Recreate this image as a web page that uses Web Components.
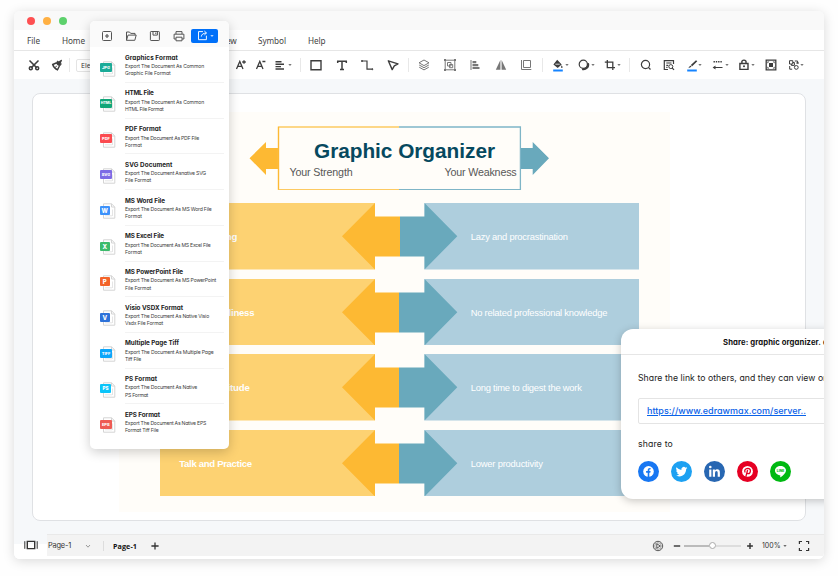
<!DOCTYPE html>
<html lang="en">
<head>
<meta charset="utf-8">
<title>Graphic Organizer</title>
<style>
    html, body { margin: 0; width: 838px; height: 576px; overflow: hidden; background: #fefefe; }
    body { font-family: Inter, "Liberation Sans", sans-serif; color: #333; }
</style>
</head>
<body>
<editor-window></editor-window>

<script>
// 14x14 glyphs, drawn with currentColor
const ICONES = {
    cut: '<g stroke-width="1.5"><path d="M2.5 2.5 9.6 9.6M11.5 2.5 4.4 9.6"/><circle cx="3.8" cy="10.3" r="1.5"/><circle cx="10.2" cy="10.3" r="1.5"/></g>',
    brush: '<path fill="currentColor" d="M11.6 2.2 8.7 3.8 7.6 3 6.2 5.4 9.7 8 11.3 5.8 10.4 5Z"/><path stroke-width="1.4" d="M6.2 5 2.7 6.5C3.2 8.5 5 10.6 7.5 11.8L9.4 8"/><path d="M5.1 9.7 6.8 7.7"/>',
    aplus: '<path stroke-width="1.3" d="M2.5 11 5.8 3.4 9 11M3.8 8.4H7.8M8.2 4H11.8M10 2.2V5.8"/>',
    aminus: '<path stroke-width="1.3" d="M2.5 11 5.8 3.4 9 11M3.8 8.4H7.8M8.4 3.5H11.4"/>',
    para: '<path stroke-width="1.4" d="M2.5 3.8H8.5M2.5 6.2H11M2.5 8.6H8M2.5 11H11"/>',
    rect: '<path stroke-width="1.4" d="M2 2.8H12V11.8H2Z"/>',
    text: '<path stroke-width="1.5" d="M2.7 5V3.2H11.3V5M7 3.2V11.5M5 11.5H9"/>',
    link: '<path stroke-width="1.2" d="M2.2 3H7V11.2H11.5"/><circle fill="currentColor" cx="2" cy="3" r=".6"/><circle fill="currentColor" cx="12.2" cy="11.2" r=".6"/>',
    arrow: '<path stroke-width="1.4" stroke-linejoin="round" d="M2.3 2.8 12 5.8 8.3 7.8 6.2 11.6Z"/>',
    layers: '<path d="M7 2 12 4.8 7 7.6 2 4.8ZM2.2 7 7 9.7 11.8 7M2.2 9.2 7 11.9 11.8 9.2"/>',
    group: '<path d="M2.2 2.2H11.8V11.8H2.2Z"/><path d="M4.5 4.5H8V8H4.5ZM6.5 6.5H9.7V9.7H6.5Z"/><path fill="currentColor" stroke="none" d="M1 1h2v2H1zM11 1h2v2h-2zM1 11h2v2H1zM11 11h2v2h-2z"/>',
    left: '<path d="M3 2V12"/><path fill="currentColor" stroke="none" d="M4.5 3H8.3V5.3H4.5ZM4.5 6H10.3V8.2H4.5ZM4.5 9H11.5V11H4.5Z"/>',
    flip: '<path fill="currentColor" stroke="none" d="M6.4 2V11.7H1.8ZM7.6 2V11.7H12.2Z"/>',
    size: '<path d="M4.5 2.5H11.5V9.5H4.5Z"/><path d="M2.5 2V11.5H12.3"/>',
    bucket: '<path fill="currentColor" stroke="none" d="M6.2 1.7 10.7 6.4 6.7 10 2.4 6.5ZM10.7 7.3c1 1.4 1.3 2.7.2 2.7s-1-1.3-.2-2.7Z"/><path stroke="#fff" stroke-width=".8" d="M4.4 6.2H8.7"/><path stroke="#1684ff" stroke-width="2" d="M2.2 12.4H11.8"/>',
    shadow: '<circle cx="6.3" cy="6.2" r="4.1" stroke-width="1.2"/><path stroke-width="2" d="M11 5.2A4.7 4.7 0 0 1 5.2 11.1"/>',
    crop: '<path stroke-width="1.3" d="M4.3 2V9.7H12M1.8 4.2H9.8V12"/>',
    search: '<circle cx="6.5" cy="6.5" r="4.1" stroke-width="1.2"/><path stroke-width="1.3" d="M9.4 9.4 11.5 11.5"/>',
    find: '<path stroke-width="1.2" d="M6 11.5H2.3V2.7H11.5V6M4.3 5H9.5M4.3 7.3H6.2M4.3 9.3H5.5"/><circle cx="8.8" cy="8.6" r="2"/><path stroke-width="1.2" d="M10.2 10 12 11.8"/>',
    pen: '<path fill="currentColor" stroke="none" d="M11 2.2 12.3 3.3 7.2 8.3 5.8 7.1ZM5.2 7.6 6.6 8.8 3.2 10.2Z"/><path stroke="#1684ff" stroke-width="2" d="M2.2 12.4H11.8"/>',
    lines: '<path stroke-width="1.5" stroke-dasharray="1.4 .9" d="M2.5 3.7H11.5"/><path stroke-width="1.2" d="M3 9.5H11.5"/><path fill="currentColor" stroke="none" d="M1.6 9.5 4.5 7.6V11.4Z"/>',
    lock: '<path stroke-width="1.4" d="M2.9 5.5H11V11.4H2.9ZM4.9 5.5V3.2Q7 1 9 3.2V5.5"/><circle fill="currentColor" stroke="none" cx="7" cy="8.3" r="1"/>',
    frame: '<path stroke-width="1.3" d="M2.2 2.2H11.8V11.8H2.2Z"/><path fill="currentColor" stroke="none" d="M5 5h4v4H5zM3.4 3.4h2L3.4 5.4zM10.6 3.4v2L8.6 3.4zM3.4 10.6v-2l2 2zM10.6 10.6h-2l2-2z"/>',
    swap: '<path d="M2.5 2.7H5.8V6H2.5ZM2.7 8V11.2H5.2M7.8 3H10.6V5.6M9.2 5H12"/><circle cx="9.3" cy="9.4" r="1.9"/><path d="M5.8 4.5H7.4V7.4H4.4V6"/>',
    caret: '<path fill="currentColor" stroke="none" opacity=".7" d="M5.3 5.9H8.7L7 8.1Z"/>',
    add: '<rect x="2.5" y="2.5" width="9" height="9" rx="1"/><path stroke-width="1.2" d="M7 5V9M5 7H9"/>',
    folder: '<path stroke-linejoin="round" d="M2.5 11.3V3H5.5L6.7 4.4H11V6M2.5 11.3 4 6.1H12.2L10.8 11.3Z"/>',
    save: '<rect x="2.4" y="2.5" width="9" height="9" rx=".7"/><path d="M5 2.6V6.1H9.4V2.6M7.8 3.5V5"/>',
    print: '<path d="M4 5V2.6H10V5M3.9 10H2.1V5.2H11.9V10H10M4 8.2H10V11.8H4Z"/>',
    export: '<path d="M7.5 2.8H2.7V11.5H11.2V7.2M5.7 8.2C6 5.7 7.6 4.6 11.2 4.3M9 2.2 11.3 4.3 9 6.4"/>',
    pages: '<path stroke-width="1.4" d="M3.3 3.4H10.7V10.6H3.3Z"/><path stroke-width="1" d="M.8 3.2V10.8M13.2 3.2V10.8"/>',
    chevron: '<path d="M5 6 7 8.2 9 6"/>',
    plus: '<path stroke-width="1.3" d="M3.4 7H10.6M7 3.4V10.6"/>',
    plusb: '<path stroke-width="1.4" d="M4.1 7H9.9M7 4.1V9.9"/>',
    minus: '<path stroke-width="1.4" d="M3.8 7H10.2"/>',
    play: '<circle cx="7" cy="7" r="4.7" stroke-width=".8"/><path stroke-width=".8" d="M5.8 4.8 9.4 7 5.8 9.2Z"/><circle cx="7" cy="7" r="3.3" stroke-width=".4"/>',
    full: '<path stroke-width="1.2" d="M2.4 5V2.5H5M9 2.5H11.6V5M11.6 9V11.5H9M5 11.5H2.4V9"/>'
};

class UiIcon extends HTMLElement {
    connectedCallback() {
        this.attachShadow({ mode: 'open' }).innerHTML = `
            <style>
                :host { display: block; flex: none; width: 14px; height: 14px; }
                svg { display: block; width: 100%; height: 100%; }
            </style>
            <svg viewBox="0 0 14 14" fill="none" stroke="currentColor">${ICONES[this.getAttribute('name')]}</svg>`;
    }
}
customElements.define('ui-icon', UiIcon);

// One line of text, tracked out or in to fill the width it is given
class FitText extends HTMLElement {
    connectedCallback() {
        this.attachShadow({ mode: 'open' }).innerHTML = `
            <style>
                :host { display: block; white-space: nowrap; flex: none; }
                span { display: inline-block; text-decoration: var(--line, none); }
            </style>
            <span><slot></slot></span>`;
        const w = parseFloat(this.getAttribute('w'));
        const span = this.shadowRoot.querySelector('span');
        const natural = span.getBoundingClientRect().width;
        this.style.width = w + 'px';
        span.style.letterSpacing = (w - natural) / this.textContent.length + 'px';
    }
}
customElements.define('fit-text', FitText);

// Row of icons placed by their centres; "|" is a divider
class ToolStrip extends HTMLElement {
    connectedCallback() {
        let end = parseFloat(this.getAttribute('start') || 0);
        let html = '';
        this.getAttribute('items').trim().split(/\s+/).forEach(item => {
            const [name, center, color] = item.split(':');
            const half = name == '|' ? 0.5 : 7;
            const gap = center - half - end;
            end = +center + half;
            html += name == '|'
                ? `<i style="margin-left:${gap}px"></i>`
                : `<ui-icon name="${name}" style="margin-left:${gap}px;${color ? 'color:' + color : ''}"></ui-icon>`;
        });
        this.attachShadow({ mode: 'open' }).innerHTML = `
            <style>
                :host { display: flex; align-items: center; color: #3d3d3d; }
                i { width: 1px; height: 14px; background: #e8e8e8; flex: none; }
            </style>${html}`;
    }
}
customElements.define('tool-strip', ToolStrip);

class FormatItem extends HTMLElement {
    connectedCallback() {
        const at = n => this.getAttribute(n);
        this.attachShadow({ mode: 'open' }).innerHTML = `
            <style>
                :host { display: grid; grid-template-columns: 25px 1fr; height: 35.7px; margin: 0 5px 0 10px; }
                .icon { width: 16px; height: 17px; margin-top: 13.2px; display: grid; }
                .icon > * { grid-area: 1 / 1; }
                .tag { align-self: start; margin-top: 2.5px; width: ${at('tw') || 12}px; height: 9px; border-radius: 1px;
                       background: ${at('color')}; color: #fff; font: 800 ${at('ts') || 4}px/9px Inter, sans-serif; text-align: center; }
                .body { border-bottom: 1px solid #f3f3f3; box-sizing: border-box; padding-top: 5.4px; color: #3c3c3c; font-size: 5.1px; line-height: 7.1px; }
                :host([last]) .body { border: 0; }
                .title { font-size: 6.3px; font-weight: 700; color: #222; line-height: 10px; margin-bottom: .5px; }
            </style>
            <div class="icon">
                <svg width="16" height="17" fill="none" stroke="#d4d4d4"><path d="M3.5.8H11.5L14.8 4V15.2H3.5ZM11.5.8V4H14.8"/><path d="M12.5 6.5V13M5 12.8H12" stroke-width=".6"/></svg>
                <div class="tag">${at('tag')}</div>
            </div>
            <div class="body">
                <fit-text class="title" w="${at('w0')}">${at('name')}</fit-text>
                <fit-text w="${at('w1')}">${at('l1')}</fit-text>
                <fit-text w="${at('w2')}">${at('l2')}</fit-text>
            </div>`;
    }
}
customElements.define('format-item', FormatItem);

class ExportMenu extends HTMLElement {
    connectedCallback() {
        this.attachShadow({ mode: 'open' }).innerHTML = `
            <style>
                :host { display: block; width: 139px; height: 428px; border-radius: 5px; background: #fff; overflow: hidden;
                        box-shadow: 0 3px 12px rgba(0,0,0,.2); font-feature-settings: "cv11"; }
                header { display: flex; align-items: center; height: 26.4px; background: #fafafa; }
                header tool-strip { width: 100.5px; height: 29px; margin-top: 3px; color: #555; }
                .go { display: flex; align-items: center; width: 27px; height: 14px; margin-top: 3px; border-radius: 2px; background: #0070f9; color: #fff; }
                .go ui-icon:first-child { margin-left: 5px; width: 13px; height: 13px; }
                .go ui-icon:last-child { margin-left: -4px; }
            </style>
            <header>
                <tool-strip items="add:16.5 folder:41 save:64.5 print:88.5"></tool-strip>
                <div class="go"><ui-icon name="export"></ui-icon><ui-icon name="caret"></ui-icon></div>
            </header>
            <format-item tag="JPG" color="#1aab98" name="Graphics Format" w0="53" l1="Export The Document As Common" w1="79" l2="Graphic File Format" w2="45.5"></format-item>
            <format-item tag="HTML" ts="3.6" color="#12a678" name="HTML File" w0="28.5" l1="Export The Document As Common" w1="79" l2="HTML File Format" w2="38.5"></format-item>
            <format-item tag="PDF" color="#fb4b50" name="PDF Format" w0="36" l1="Export The Document As PDF File" w1="74" l2="Format" w2="17"></format-item>
            <format-item tag="SVG" color="#7d6be5" name="SVG Document" w0="47.5" l1="Export The Document Asnative SVG" w1="81" l2="File Format" w2="26"></format-item>
            <format-item tag="W" tw="9.5" ts="6" color="#3d92fb" name="MS Word File" w0="40" l1="Export The Document As MS Word File" w1="86.5" l2="Format" w2="17"></format-item>
            <format-item tag="X" tw="9.5" ts="6" color="#3cbb6c" name="MS Excel File" w0="39" l1="Export The Document As MS Excel File" w1="85.5" l2="Format" w2="17"></format-item>
            <format-item tag="P" tw="9.5" ts="6" color="#f3642a" name="MS PowerPoint File" w0="58" l1="Export The Document As MS PowerPoint" w1="91" l2="File Format" w2="26"></format-item>
            <format-item tag="V" tw="9.5" ts="6" color="#2d72d9" name="Visio VSDX Format" w0="58" l1="Export The Document As Native Visio" w1="84" l2="Vsdx File Format" w2="38"></format-item>
            <format-item tag="TIFF" ts="4" color="#0da6fa" name="Multiple Page Tiff" w0="54" l1="Export The Document As Multiple Page" w1="88.5" l2="Tiff File" w2="16"></format-item>
            <format-item tag="PS" tw="11" ts="4.6" color="#0bc5fa" name="PS Format" w0="32" l1="Export The Document As Native" w1="72" l2="PS Format" w2="23"></format-item>
            <format-item last tag="EPS" tw="11.5" color="#ee5b54" name="EPS Format" w0="35" l1="Export The Document As Native EPS" w1="81" l2="Format Tiff File" w2="33.5"></format-item>`;
    }
}
customElements.define('export-menu', ExportMenu);

class ShareDialog extends HTMLElement {
    connectedCallback() {
        this.attachShadow({ mode: 'open' }).innerHTML = `
            <style>
                :host { display: block; box-sizing: border-box; width: 260px; height: 170px; border-radius: 12px; background: #fff;
                        box-shadow: 0 2px 9px rgba(0,0,0,.22); color: #222; font-size: 8.7px; font-feature-settings: "cv11"; }
                header { display: flex; gap: 2px; height: 22px; padding: 3px 0 0 102px; border-bottom: 1px solid #e6e6e6;
                         line-height: 22px; font-size: 7.7px; font-weight: 700; color: #111; }
                main { padding: 16px 0 0 17px; line-height: 14px; }
                .link { --line: underline; height: 24px; width: 230px; margin: 13px 0 13px; border: 1px solid #e4e4e4; border-radius: 2px; padding-left: 8px;
                        line-height: 24px; font-size: 9px; font-weight: 500; color: #0a62e8; }
                .net { display: flex; gap: 11.9px; margin-top: 9.5px; }
                svg { width: 21px; height: 21px; display: block; }
            </style>
            <header><fit-text w="98">Share: graphic organizer.</fit-text><span>eddx</span></header>
            <main>
                <fit-text w="205">Share the link to others, and they can view online</fit-text>
                <div class="link"><fit-text w="159">https://www.edrawmax.com/server..</fit-text></div>
                <fit-text w="35">share to</fit-text>
                <div class="net">
                    <svg viewBox="0 0 21 21"><circle cx="10.5" cy="10.5" r="10.5" fill="#1877f2"/><circle cx="10.5" cy="10.4" r="5.3" fill="#fff"/><path fill="#1877f2" d="M9.7 16V11.7H8.1V10H9.7V8.8Q9.8 6.6 12.6 7V8.4Q11.3 8.2 11.3 9.2V10H12.6L12.3 11.7H11.3V16Z"/></svg>
                    <svg viewBox="0 0 21 21"><circle cx="10.5" cy="10.5" r="10.5" fill="#1da1f2"/><path fill="#fff" transform="translate(4.6 4.8) scale(.49)" d="M23.9 4.6a10 10 0 0 1-2.8.8 4.9 4.9 0 0 0 2.2-2.7 9.9 9.9 0 0 1-3.1 1.2 4.9 4.9 0 0 0-8.4 4.5A14 14 0 0 1 1.7 3.1a4.9 4.9 0 0 0 1.5 6.6 4.9 4.9 0 0 1-2.2-.6 4.9 4.9 0 0 0 3.9 4.9 4.9 4.9 0 0 1-2.2.1 4.9 4.9 0 0 0 4.6 3.4A9.9 9.9 0 0 1 0 19.5a14 14 0 0 0 7.5 2.2c9.1 0 14-7.5 14-14.6a10 10 0 0 0 2.4-2.5Z"/></svg>
                    <svg viewBox="0 0 21 21"><circle cx="10.5" cy="10.5" r="10.5" fill="#2867b2"/><path fill="#fff" d="M5.2 8.4H7.4V15.7H5.2ZM8.8 8.4H10.9V9.4Q11.6 8.2 13.2 8.2 15.9 8.2 15.9 11.4V15.7H13.7V11.8Q13.7 10.1 12.5 10.1 11 10.1 11 12V15.7H8.8Z"/><circle cx="6.3" cy="6" r="1.3" fill="#fff"/></svg>
                    <svg viewBox="0 0 21 21"><circle cx="10.5" cy="10.5" r="10.5" fill="#e60023"/><circle cx="10.5" cy="10.4" r="5.4" fill="#fff"/><path fill="none" stroke="#e60023" stroke-width="1.3" d="M8.8 15.9 10.6 9M8.2 11.5C6.9 9.4 8.4 7.3 10.7 7.3 15 7.5 13.4 12.7 11.2 12.6Q10.2 12.6 9.9 11.8"/></svg>
                    <svg viewBox="0 0 21 21"><circle cx="10.5" cy="10.5" r="10.5" fill="#00b912"/><path fill="#fff" d="M10.5 5C13.5 5 16 7 16 9.5 16 12 13.3 14.2 10.7 16.2 10 16.6 10.3 15.7 10.3 14.3 7.3 14.1 5 12 5 9.5 5 7 7.5 5 10.5 5Z"/><text x="10.5" y="11" text-anchor="middle" font-family="Inter, sans-serif" font-size="3.3" font-weight="800" fill="#00b912">LINE</text></svg>
                </div>
            </main>`;
    }
}
customElements.define('share-dialog', ShareDialog);

class StrengthRow extends HTMLElement {
    connectedCallback() {
        const mid = this.getAttribute('mid') || 239;
        this.attachShadow({ mode: 'open' }).innerHTML = `
            <style>
                :host { display: grid; width: 479px; height: 66.5px; color: #fff; line-height: 12px; }
                svg, .labels { grid-area: 1 / 1; }
                .labels { display: flex; align-items: center; padding-left: 19.8px; padding-top: 1px; }
                .left { width: 291.4px; font-size: 9.6px; font-weight: 700; }
                .right { font-size: 9.4px; }
            </style>
            <svg width="479" height="66.5">
                <path fill="#fdd272" d="M0 0H215V66.5H0Z"/>
                <path fill="#aecedd" d="M264.5 0H479V66.5H264.5Z"/>
                <path fill="#fdb933" d="M182 33.2 215 0V13.4H${mid}V53.6H215V66.5Z"/>
                <path fill="#69a9bc" d="M297.3 33.2 264.5 0V13.4H${mid}V53.6H264.5V66.5Z"/>
            </svg>
            <div class="labels">
                <div class="left"><slot name="strength"></slot></div>
                <div class="right"><slot name="weakness"></slot></div>
            </div>`;
    }
}
customElements.define('strength-row', StrengthRow);

class OrganizerChart extends HTMLElement {
    connectedCallback() {
        this.attachShadow({ mode: 'open' }).innerHTML = `
            <style>
                :host { display: block; box-sizing: border-box; width: 551px; height: 400px; padding: 14px 0 0 41px; background: #fffdf9;
                        font-family: "Liberation Sans", Arial, sans-serif; }
                .head { display: grid; width: 300px; height: 64px; margin-left: 89px; margin-bottom: 13.8px; }
                .head > * { grid-area: 1 / 1; }
                .words { padding: 12px 32px 0 41px; }
                h1 { margin: 0 0 0 24.5px; font-size: 20.8px; line-height: 26px; color: #06495f; }
                .sub { display: flex; justify-content: space-between; font-size: 10.7px; line-height: 16px; color: #575757; }
                .rows { display: grid; gap: 9px; }
            </style>
            <div class="head">
                <svg width="300" height="64">
                    <path fill="#fdb933" d="M.5 32.3 17 16V22H29V43H17V49Z"/>
                    <path fill="#69a9bc" d="M300 32.3 283.7 16V22H271V43H283.7V49Z"/>
                    <path fill="#fffdf9" d="M29 1H271V64H29Z"/>
                    <path fill="none" stroke="#fdca62" stroke-width="1.3" d="M150 1H29.5V63.6H150"/>
                    <path fill="none" stroke="#fdb933" stroke-width="1.2" d="M29.5 1V63.5"/>
                    <path fill="none" stroke="#7fb5c7" stroke-width="1.3" d="M150 1H271.4V63.6H150"/>
                </svg>
                <div class="words">
                    <h1><fit-text w="181">Graphic Organizer</fit-text></h1>
                    <div class="sub"><fit-text w="63">Your Strength</fit-text><fit-text w="72">Your Weakness</fit-text></div>
                </div>
            </div>
            <div class="rows">
                <strength-row mid="240"><fit-text slot="strength" w="58">Fast learning</fit-text><fit-text slot="weakness" w="97">Lazy and procrastination</fit-text></strength-row>
                <strength-row><fit-text slot="strength" w="71" style="margin-left:4px">Good timeliness</fit-text><fit-text slot="weakness" w="136.5">No related professional knowledge</fit-text></strength-row>
                <strength-row><fit-text slot="strength" w="61" style="margin-left:9.5px">Good attitude</fit-text><fit-text slot="weakness" w="111">Long time to digest the work</fit-text></strength-row>
                <strength-row><fit-text slot="strength" w="72.5">Talk and Practice</fit-text><fit-text slot="weakness" w="72">Lower productivity</fit-text></strength-row>
            </div>`;
    }
}
customElements.define('organizer-chart', OrganizerChart);

class StatusBar extends HTMLElement {
    connectedCallback() {
        this.attachShadow({ mode: 'open' }).innerHTML = `
            <style>
                :host { display: flex; height: 25px; background: #fff; color: #333; font-size: 7.4px; }
                .side { width: 33px; height: 25px; background: linear-gradient(#f6f8fa 10px, #fff 10px); }
                .side ui-icon { margin: 4px 0 0 9.5px; }
                .bar { display: flex; align-items: center; flex: 1; height: 22px; background: #f3f3f3; border-top: 1px solid #e9e9e9; box-sizing: border-box; padding-left: 1px; }
                .v { width: 1px; height: 10px; background: #ddd; margin: 0 9px 0 8px; }
                .track { display: flex; align-items: center; width: 57px; height: 7px; margin: 0 3px 0 0; }
                .a { width: 25px; height: 2px; background: #bbb; }
                .k { width: 5px; height: 5px; border: 1px solid #aaa; border-radius: 50%; background: #fff; }
                .b { flex: 1; height: 2px; background: #ddd; }
            </style>
            <div class="side"><ui-icon name="pages"></ui-icon></div>
            <div class="bar">
                <fit-text w="23">Page-1</fit-text>
                <ui-icon name="chevron" style="margin-left:10px;color:#999"></ui-icon>
                <div class="v"></div>
                <fit-text w="24" style="font:700 7.2px 'Open Sans',sans-serif;color:#111">Page-1</fit-text>
                <ui-icon name="plus" style="margin-left:11px"></ui-icon>
                <ui-icon name="play" style="margin-left:489px"></ui-icon>
                <ui-icon name="minus" style="margin-left:5px"></ui-icon>
                <div class="track"><div class="a"></div><div class="k"></div><div class="b"></div></div>
                <ui-icon name="plusb" style="margin-left:-1px"></ui-icon>
                <fit-text w="18.5" style="margin-left:5px;font-size:7px">100%</fit-text>
                <ui-icon name="caret" style="margin-left:-3px"></ui-icon>
                <ui-icon name="full" style="margin-left:5px"></ui-icon>
            </div>`;
    }
}
customElements.define('status-bar', StatusBar);

class EditorWindow extends HTMLElement {
    connectedCallback() {
        this.attachShadow({ mode: 'open' }).innerHTML = `
            <style>
                :host { display: block; padding: 11px 14px 17px; width: 810px; height: 548px; }
                .win { position: relative; display: flex; flex-direction: column; width: 810px; height: 548px; border-radius: 6px; overflow: hidden; background: #f6f8fa; }
                .frame { border-radius: 6px; box-shadow: 0 2px 12px rgba(0,0,0,.15); }
                .title { display: flex; align-items: center; gap: 8.2px; height: 19px; padding-left: 13px; background: #f9f9f9; }
                .title i { width: 8px; height: 8px; border-radius: 50%; }
                nav { display: flex; align-items: center; height: 21px; padding: 1px 0 0 13px; box-sizing: border-box; background: #fff; border-bottom: 1px solid #e6e6e6;
                      font: 8.2px "Noto Sans", sans-serif; color: #444; }
                .tools { display: flex; align-items: center; height: 28px; background: #fff; }
                .font { width: 141px; height: 13px; margin-left: 6px; border: 1px solid #e4e4e4; border-radius: 2px; box-sizing: border-box; padding-left: 4px; font: 7px/11px "Open Sans", sans-serif; color: #333; }
                .stage { flex: 1; padding: 13.5px 0 0 18px; }
                .card { box-sizing: border-box; width: 774px; height: 428px; border: 1px solid #dfe1e4; border-radius: 8px; background: #fff; padding: 18px 0 0 85.5px; }
                export-menu { position: absolute; left: 76px; top: 10px; }
                share-dialog { position: absolute; left: 607px; top: 318px; }
            </style>
            <div class="frame"><div class="win">
                <div class="title"><i style="background:#fe5052"></i><i style="background:#ffb043"></i><i style="background:#5dd16c"></i></div>
                <nav>
                    <fit-text w="13">File</fit-text>
                    <fit-text w="23" style="margin-left:22px">Home</fit-text>
                    <fit-text w="17" style="margin-left:134.5px">View</fit-text>
                    <fit-text w="28" style="margin-left:21.5px">Symbol</fit-text>
                    <fit-text w="17.5" style="margin-left:22px">Help</fit-text>
                </nav>
                <div class="tools">
                    <tool-strip start="14" items="cut:34 brush:57 |:69.5"></tool-strip>
                    <div class="font">Ele</div>
                    <tool-strip start="217" items="aplus:240.5 aminus:260.5 para:280 caret:289.5 |:300.5 rect:316 text:341.5 link:367 arrow:392.5 |:408.5
                        layers:424:#777 group:449.5:#777 left:475:#777 flip:500.5:#777 size:526:#777 |:542 bucket:558 caret:567 shadow:584 caret:593 crop:610 caret:619 |:629.5
                        search:646 find:669 pen:691.5 caret:700 lines:718 caret:726.5 lock:744 caret:753 frame:770.5 swap:794 caret:802"></tool-strip>
                </div>
                <div class="stage"><div class="card"><organizer-chart></organizer-chart></div></div>
                <status-bar></status-bar>
                <export-menu></export-menu>
                <share-dialog></share-dialog>
            </div></div>`;
    }
}
customElements.define('editor-window', EditorWindow);
</script>
</body>
</html>
